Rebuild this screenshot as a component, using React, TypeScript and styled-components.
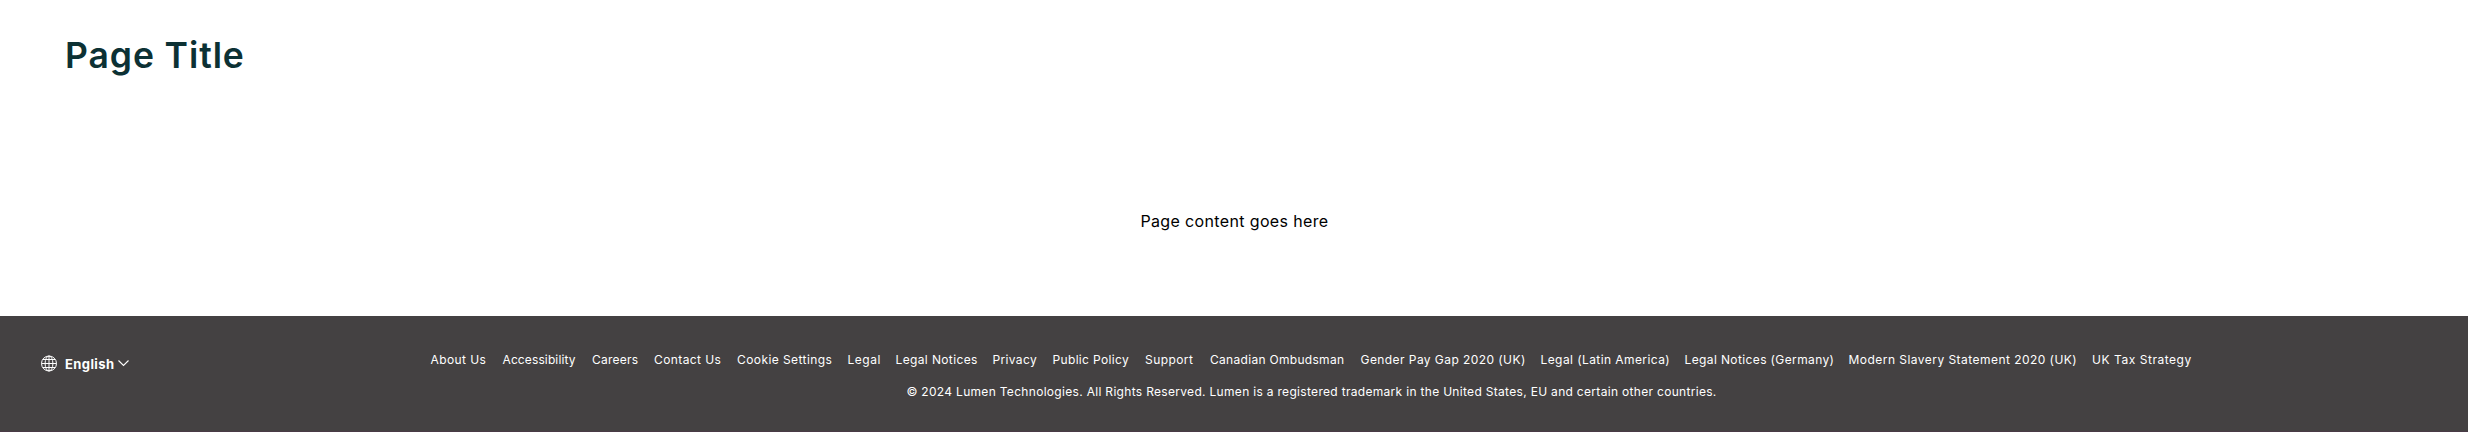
import React from 'react';
import styled, { createGlobalStyle } from 'styled-components';

const GlobalStyle = createGlobalStyle`
  *, *::before, *::after { box-sizing: border-box; }
  body {
    margin: 0;
    background: #fff;
    font-family: Inter, "Liberation Sans", sans-serif;
    color: #000;
  }
`;

const Page = styled.div`
  display: flex;
  flex-direction: column;
  height: 432px;
`;

const Main = styled.main`
  flex: 1;
  display: flex;
  flex-direction: column;
  padding: 35px 65px 0;
`;

const Title = styled.h1`
  margin: 0;
  font-size: 35.5px;
  line-height: 42px;
  font-weight: 600;
  letter-spacing: 0.9px;
  color: #0c3134;
`;

const Content = styled.p`
  margin: 132px 0 0;
  text-align: center;
  text-indent: 1px;
  font-size: 16px;
  line-height: 24px;
  letter-spacing: 0.36px;
`;

const Footer = styled.footer`
  flex: none;
  display: flex;
  height: 116px;
  background: #444142;
  border-bottom: 1px solid #493b46;
  color: #fff;
`;

const LanguageButton = styled.button`
  display: flex;
  align-items: center;
  align-self: flex-start;
  width: 389.5px;
  height: 20px;
  margin: 37px 0 0 41px;
  padding: 0;
  border: 0;
  background: none;
  color: inherit;
  font: 700 13px/20px Inter, "Liberation Sans", sans-serif;
  letter-spacing: 0.4px;
`;

const LanguageName = styled.span`
  margin: 2px 4px 0 7px;
`;

const Legal = styled.div`
  width: 1762px;
  padding-top: 34px;
  font-size: 12px;
  line-height: 20px;
`;

const Links = styled.nav`
  display: flex;
  gap: 16px;
`;

const FooterLink = styled.a<{ $width: number; $tracking: number }>`
  flex: none;
  width: ${(p) => p.$width}px;
  letter-spacing: ${(p) => p.$tracking}px;
  white-space: nowrap;
`;

const Copyright = styled.p`
  margin: 12px 0 0;
  text-align: center;
  letter-spacing: 0.31px;
  white-space: nowrap;
`;

const links = [
  { label: 'About Us', width: 56, tracking: 0.41 },
  { label: 'Accessibility', width: 73.5, tracking: 0.12 },
  { label: 'Careers', width: 46, tracking: 0.23 },
  { label: 'Contact Us', width: 67, tracking: 0.4 },
  { label: 'Cookie Settings', width: 94.5, tracking: 0.42 },
  { label: 'Legal', width: 32, tracking: 0.5 },
  { label: 'Legal Notices', width: 81, tracking: 0.37 },
  { label: 'Privacy', width: 44, tracking: 0.35 },
  { label: 'Public Policy', width: 76.5, tracking: 0.34 },
  { label: 'Support', width: 49, tracking: 0.43 },
  { label: 'Canadian Ombudsman', width: 134.5, tracking: 0.3 },
  { label: 'Gender Pay Gap 2020 (UK)', width: 164, tracking: 0.43 },
  { label: 'Legal (Latin America)', width: 128, tracking: 0.42 },
  { label: 'Legal Notices (Germany)', width: 148, tracking: 0.38 },
  { label: 'Modern Slavery Statement 2020 (UK)', width: 227.5, tracking: 0.46 },
  { label: 'UK Tax Strategy', width: 100.5, tracking: 0.54 },
];

const GlobeIcon = () => (
  <svg width="17" height="17" viewBox="0 0 17 17" fill="none" stroke="#fff" strokeWidth="1">
    <circle cx="8" cy="8.5" r="7.5" />
    <ellipse cx="8" cy="8.5" rx="3.9" ry="7.5" />
    <path d="M8 1v15M.5 8.5h15M1.7 4.5h12.6M1.7 12.5h12.6" />
  </svg>
);

const ChevronIcon = () => (
  <svg width="11" height="8" viewBox="0 0 11 8" fill="none" stroke="#fff" strokeWidth="1.1">
    <path d="M.5 1.5 5.5 6.5l5-5" />
  </svg>
);

export default function App() {
  return (
    <>
      <GlobalStyle />
      <Page>
        <Main>
          <Title>Page Title</Title>
          <Content>Page content goes here</Content>
        </Main>
        <Footer>
          <LanguageButton type="button">
            <GlobeIcon />
            <LanguageName>English</LanguageName>
            <ChevronIcon />
          </LanguageButton>
          <Legal>
            <Links>
              {links.map((link) => (
                <FooterLink key={link.label} $width={link.width} $tracking={link.tracking}>
                  {link.label}
                </FooterLink>
              ))}
            </Links>
            <Copyright>
              © 2024 Lumen Technologies. All Rights Reserved. Lumen is a registered trademark in the
              United States, EU and certain other countries.
            </Copyright>
          </Legal>
        </Footer>
      </Page>
    </>
  );
}
